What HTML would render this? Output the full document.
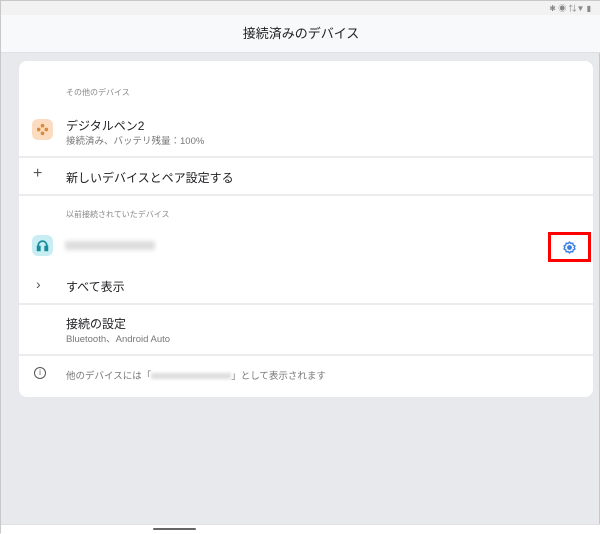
<!DOCTYPE html>
<html><head><meta charset="utf-8"><style>
*{margin:0;padding:0;box-sizing:border-box}
body{width:600px;height:533px;overflow:hidden;background:#e8e9ec;font-family:"Liberation Sans","Noto Sans CJK JP",sans-serif;position:relative;border:1px solid #c8c8c8}
.abs{position:absolute}
.status{left:0;top:0;width:600px;height:14px;background:#f2f2f3}
.header{left:0;top:14px;width:600px;height:38px;background:#f8f9fa;border-bottom:1px solid #dfe0e2;text-align:center;font-size:13px;line-height:38px;color:#222}
.card{left:18px;top:60px;width:574px;height:336px;background:#fff;border-radius:8px}
.sep{left:18px;width:574px;height:2px;background:#ececee}
.t{color:#202124;font-size:12px}
.s{color:#777;font-size:9.5px}
.g{color:#888;font-size:8px}
</style></head><body>
<div class="abs status"></div>
<div class="abs" style="right:8px;top:2px;font-size:8px;color:#888">✱ ◉ ⇅▼ ▮</div>
<div class="abs header">接続済みのデバイス</div>
<div class="abs card"></div>
<div class="abs g" style="left:65px;top:86px">その他のデバイス</div>
<div class="abs" style="left:31px;top:118px;width:21px;height:21px;border-radius:6px;background:#fcdcc0"></div>
<svg class="abs" style="left:35px;top:122px" width="13" height="13" viewBox="0 0 12 12" fill="#d98a3c"><circle cx="6" cy="2.5" r="1.7"/><circle cx="6" cy="9.5" r="1.7"/><circle cx="2.5" cy="6" r="1.7"/><circle cx="9.5" cy="6" r="1.7"/></svg>
<div class="abs t" style="left:65px;top:116px">デジタルペン2</div>
<div class="abs s" style="left:65px;top:132px">接続済み、バッテリ残量：100%</div>
<div class="abs sep" style="top:155px"></div>
<div class="abs" style="left:32px;top:164px;font-size:16px;color:#555">+</div>
<div class="abs t" style="left:65px;top:168px">新しいデバイスとペア設定する</div>
<div class="abs sep" style="top:193px"></div>
<div class="abs g" style="left:65px;top:208px">以前接続されていたデバイス</div>
<div class="abs" style="left:31px;top:234px;width:21px;height:21px;border-radius:6px;background:#c8eef4"></div>
<svg class="abs" style="left:35px;top:238px" width="13" height="13" viewBox="0 0 12 12" fill="none" stroke="#1a8c9c" stroke-width="1.6"><path d="M2 9V6a4 4 0 0 1 8 0v3"/><rect x="1.5" y="7" width="2" height="3.5" fill="#1a8c9c"/><rect x="8.5" y="7" width="2" height="3.5" fill="#1a8c9c"/></svg>
<div class="abs" style="left:64px;top:240px;width:90px;height:9px;background:#ddd;filter:blur(2px)"></div>
<div class="abs" style="left:547px;top:231px;width:43px;height:30px;border:3px solid #f00"></div>
<svg class="abs" style="left:562px;top:240px" width="13" height="13" viewBox="0 0 12 12" fill="none" stroke="#3b7de0" stroke-width="1.3"><path d="M6 1l1.2 1.3 1.8-.3.4 1.7 1.6.9-.7 1.4.7 1.4-1.6.9-.4 1.7-1.8-.3L6 11 4.8 9.7 3 10l-.4-1.7L1 7.4 1.7 6 1 4.6l1.6-.9L3 2l1.8.3z"/><circle cx="6" cy="6" r="1.6" fill="#3b7de0"/></svg>
<div class="abs" style="left:35px;top:275px;font-size:14px;color:#555">›</div>
<div class="abs t" style="left:65px;top:277px">すべて表示</div>
<div class="abs sep" style="top:302px"></div>
<div class="abs t" style="left:65px;top:314px">接続の設定</div>
<div class="abs s" style="left:65px;top:330px">Bluetooth、Android Auto</div>
<div class="abs sep" style="top:353px"></div>
<div class="abs" style="left:33px;top:366px;width:12px;height:12px;border:1.3px solid #555;border-radius:50%;font-size:8px;line-height:9px;text-align:center;color:#555">i</div>
<div class="abs s" style="left:65px;top:367px">他のデバイスには「<span style="display:inline-block;width:80px;height:6px;background:#ddd;filter:blur(1.5px)"></span>」として表示されます</div>
<div class="abs" style="left:0;top:523px;width:600px;height:10px;background:#fff;border-top:1px solid #e0e0e0"></div>
<div class="abs" style="left:152px;top:527px;width:43px;height:2px;background:#666;border-radius:1px"></div>
</body></html>
